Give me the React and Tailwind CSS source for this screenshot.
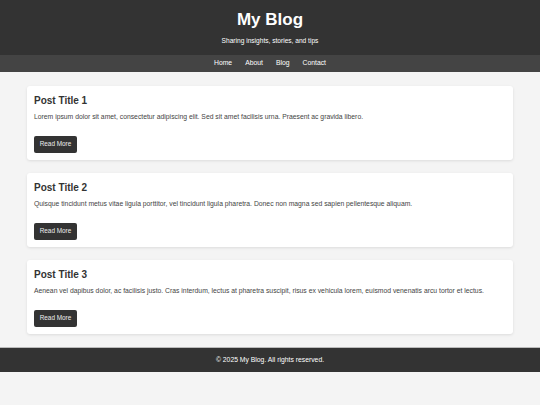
import React from 'react'

const posts = [
  {
    id: 1,
    title: 'Post Title 1',
    body: 'Lorem ipsum dolor sit amet, consectetur adipiscing elit. Sed sit amet facilisis urna. Praesent ac gravida libero.',
  },
  {
    id: 2,
    title: 'Post Title 2',
    body: 'Quisque tincidunt metus vitae ligula porttitor, vel tincidunt ligula pharetra. Donec non magna sed sapien pellentesque aliquam.',
  },
  {
    id: 3,
    title: 'Post Title 3',
    body: 'Aenean vel dapibus dolor, ac facilisis justo. Cras interdum, lectus at pharetra suscipit, risus ex vehicula lorem, euismod venenatis arcu tortor et lectus.',
  },
]

export default function App() {
  return (
    <div className="min-h-[405px] bg-[#f4f4f4] font-['Liberation_Sans',Arial,sans-serif] text-[#333]">
      <header className="h-[55px] bg-[#333] pt-[11px] text-center text-white">
        <h1 className="text-[17px] font-bold leading-none">My Blog</h1>
        <p className="mt-[10px] text-[6.6px] leading-none">Sharing insights, stories, and tips</p>
      </header>

      <nav className="flex h-[17px] items-center justify-center gap-[13px] bg-[#444] text-[6.8px] text-white">
        <a href="#">Home</a>
        <a href="#">About</a>
        <a href="#">Blog</a>
        <a href="#">Contact</a>
      </nav>

      <main className="mx-auto flex w-[90%] flex-col gap-[13px] pt-[14px] pb-[13px]">
        {posts.map((post) => (
          <article
            key={post.id}
            className="h-[74px] rounded-[3px] bg-white px-[7px] pt-[10px] shadow-[0_1px_3px_rgba(0,0,0,0.1)]"
          >
            <h2 className="text-[10px] font-bold leading-none">{post.title}</h2>
            <p className="mt-[8px] text-[6.8px] leading-none text-[#444]">{post.body}</p>
            <button className="mt-[15px] h-[17px] w-[43px] rounded-[2px] bg-[#333] text-[6.4px] text-[#eee]">
              Read More
            </button>
          </article>
        ))}
      </main>

      <footer className="flex h-[25px] items-center justify-center border-t border-[#bbb] bg-[#333] text-[6.8px] text-white">
        © 2025 My Blog. All rights reserved.
      </footer>
    </div>
  )
}
